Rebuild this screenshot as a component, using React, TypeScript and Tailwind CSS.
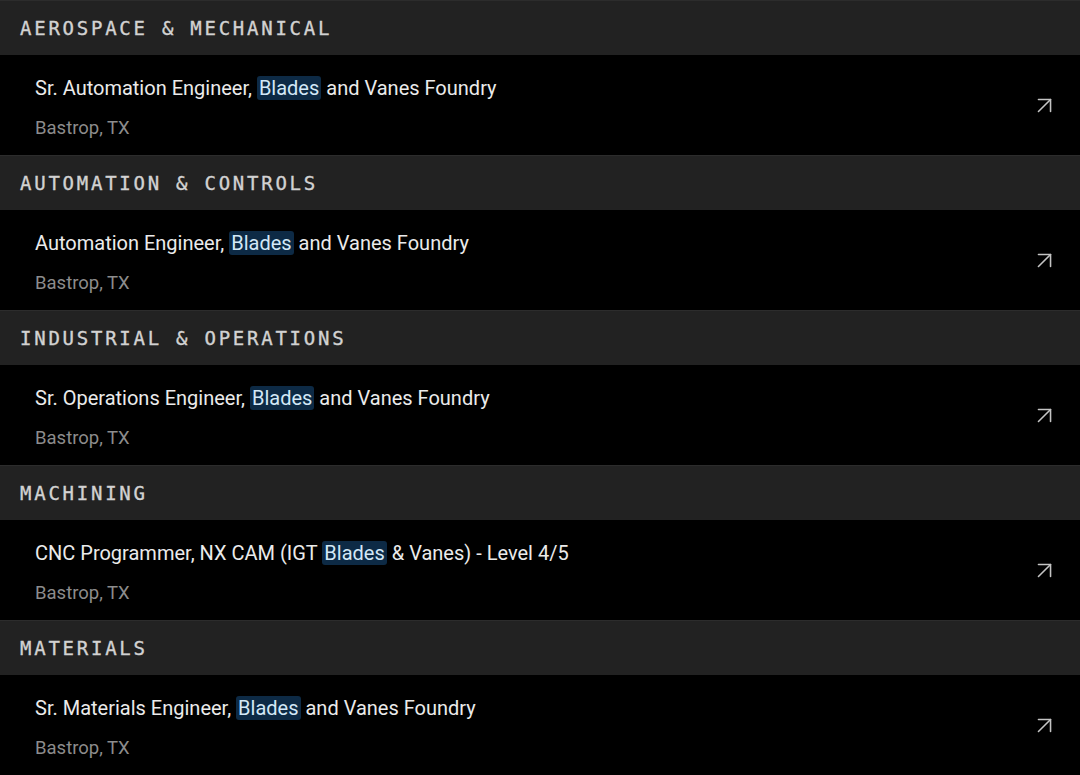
import { ArrowUpRight } from 'lucide-react'

type Job = { before: string; after: string; location: string }
type Section = { title: string; job: Job }

const sections: Section[] = [
  {
    title: 'AEROSPACE & MECHANICAL',
    job: { before: 'Sr. Automation Engineer, ', after: ' and Vanes Foundry', location: 'Bastrop, TX' },
  },
  {
    title: 'AUTOMATION & CONTROLS',
    job: { before: 'Automation Engineer, ', after: ' and Vanes Foundry', location: 'Bastrop, TX' },
  },
  {
    title: 'INDUSTRIAL & OPERATIONS',
    job: { before: 'Sr. Operations Engineer, ', after: ' and Vanes Foundry', location: 'Bastrop, TX' },
  },
  {
    title: 'MACHINING',
    job: { before: 'CNC Programmer, NX CAM (IGT ', after: ' & Vanes) - Level 4/5', location: 'Bastrop, TX' },
  },
  {
    title: 'MATERIALS',
    job: { before: 'Sr. Materials Engineer, ', after: ' and Vanes Foundry', location: 'Bastrop, TX' },
  },
]

function JobRow({ job }: { job: Job }) {
  return (
    <a href="#" className="flex items-center justify-between bg-black pl-[35px] pr-[21px] h-[100px]">
      <div className="flex flex-col pt-[4px]">
        <p className="text-[20px] leading-[26px] text-[#ebebeb] font-['Roboto',sans-serif]">
          {job.before}
          <mark className="bg-[#0d2a45] text-[#d3e8f7] rounded-[3px] px-[2px]">Blades</mark>
          {job.after}
        </p>
        <p className="mt-[15px] text-[18.5px] leading-[24px] text-[#8c8c8c] font-['Roboto',sans-serif]">
          {job.location}
        </p>
      </div>
      <ArrowUpRight className="w-[29px] h-[29px] text-[#c4c4c4]" strokeWidth={1.3} />
    </a>
  )
}

export default function App() {
  return (
    <div className="min-h-screen bg-black">
      {sections.map((s) => (
        <section key={s.title}>
          <h2 className="h-[55px] flex items-center px-[20px] bg-[#222222] border-t border-[#2c2c2c] text-[19px] tracking-[2.75px] text-[#d2d2d2] font-['DejaVu_Sans_Mono',monospace] [-webkit-text-stroke:0.35px_#d2d2d2]">
            {s.title}
          </h2>
          <JobRow job={s.job} />
        </section>
      ))}
    </div>
  )
}
